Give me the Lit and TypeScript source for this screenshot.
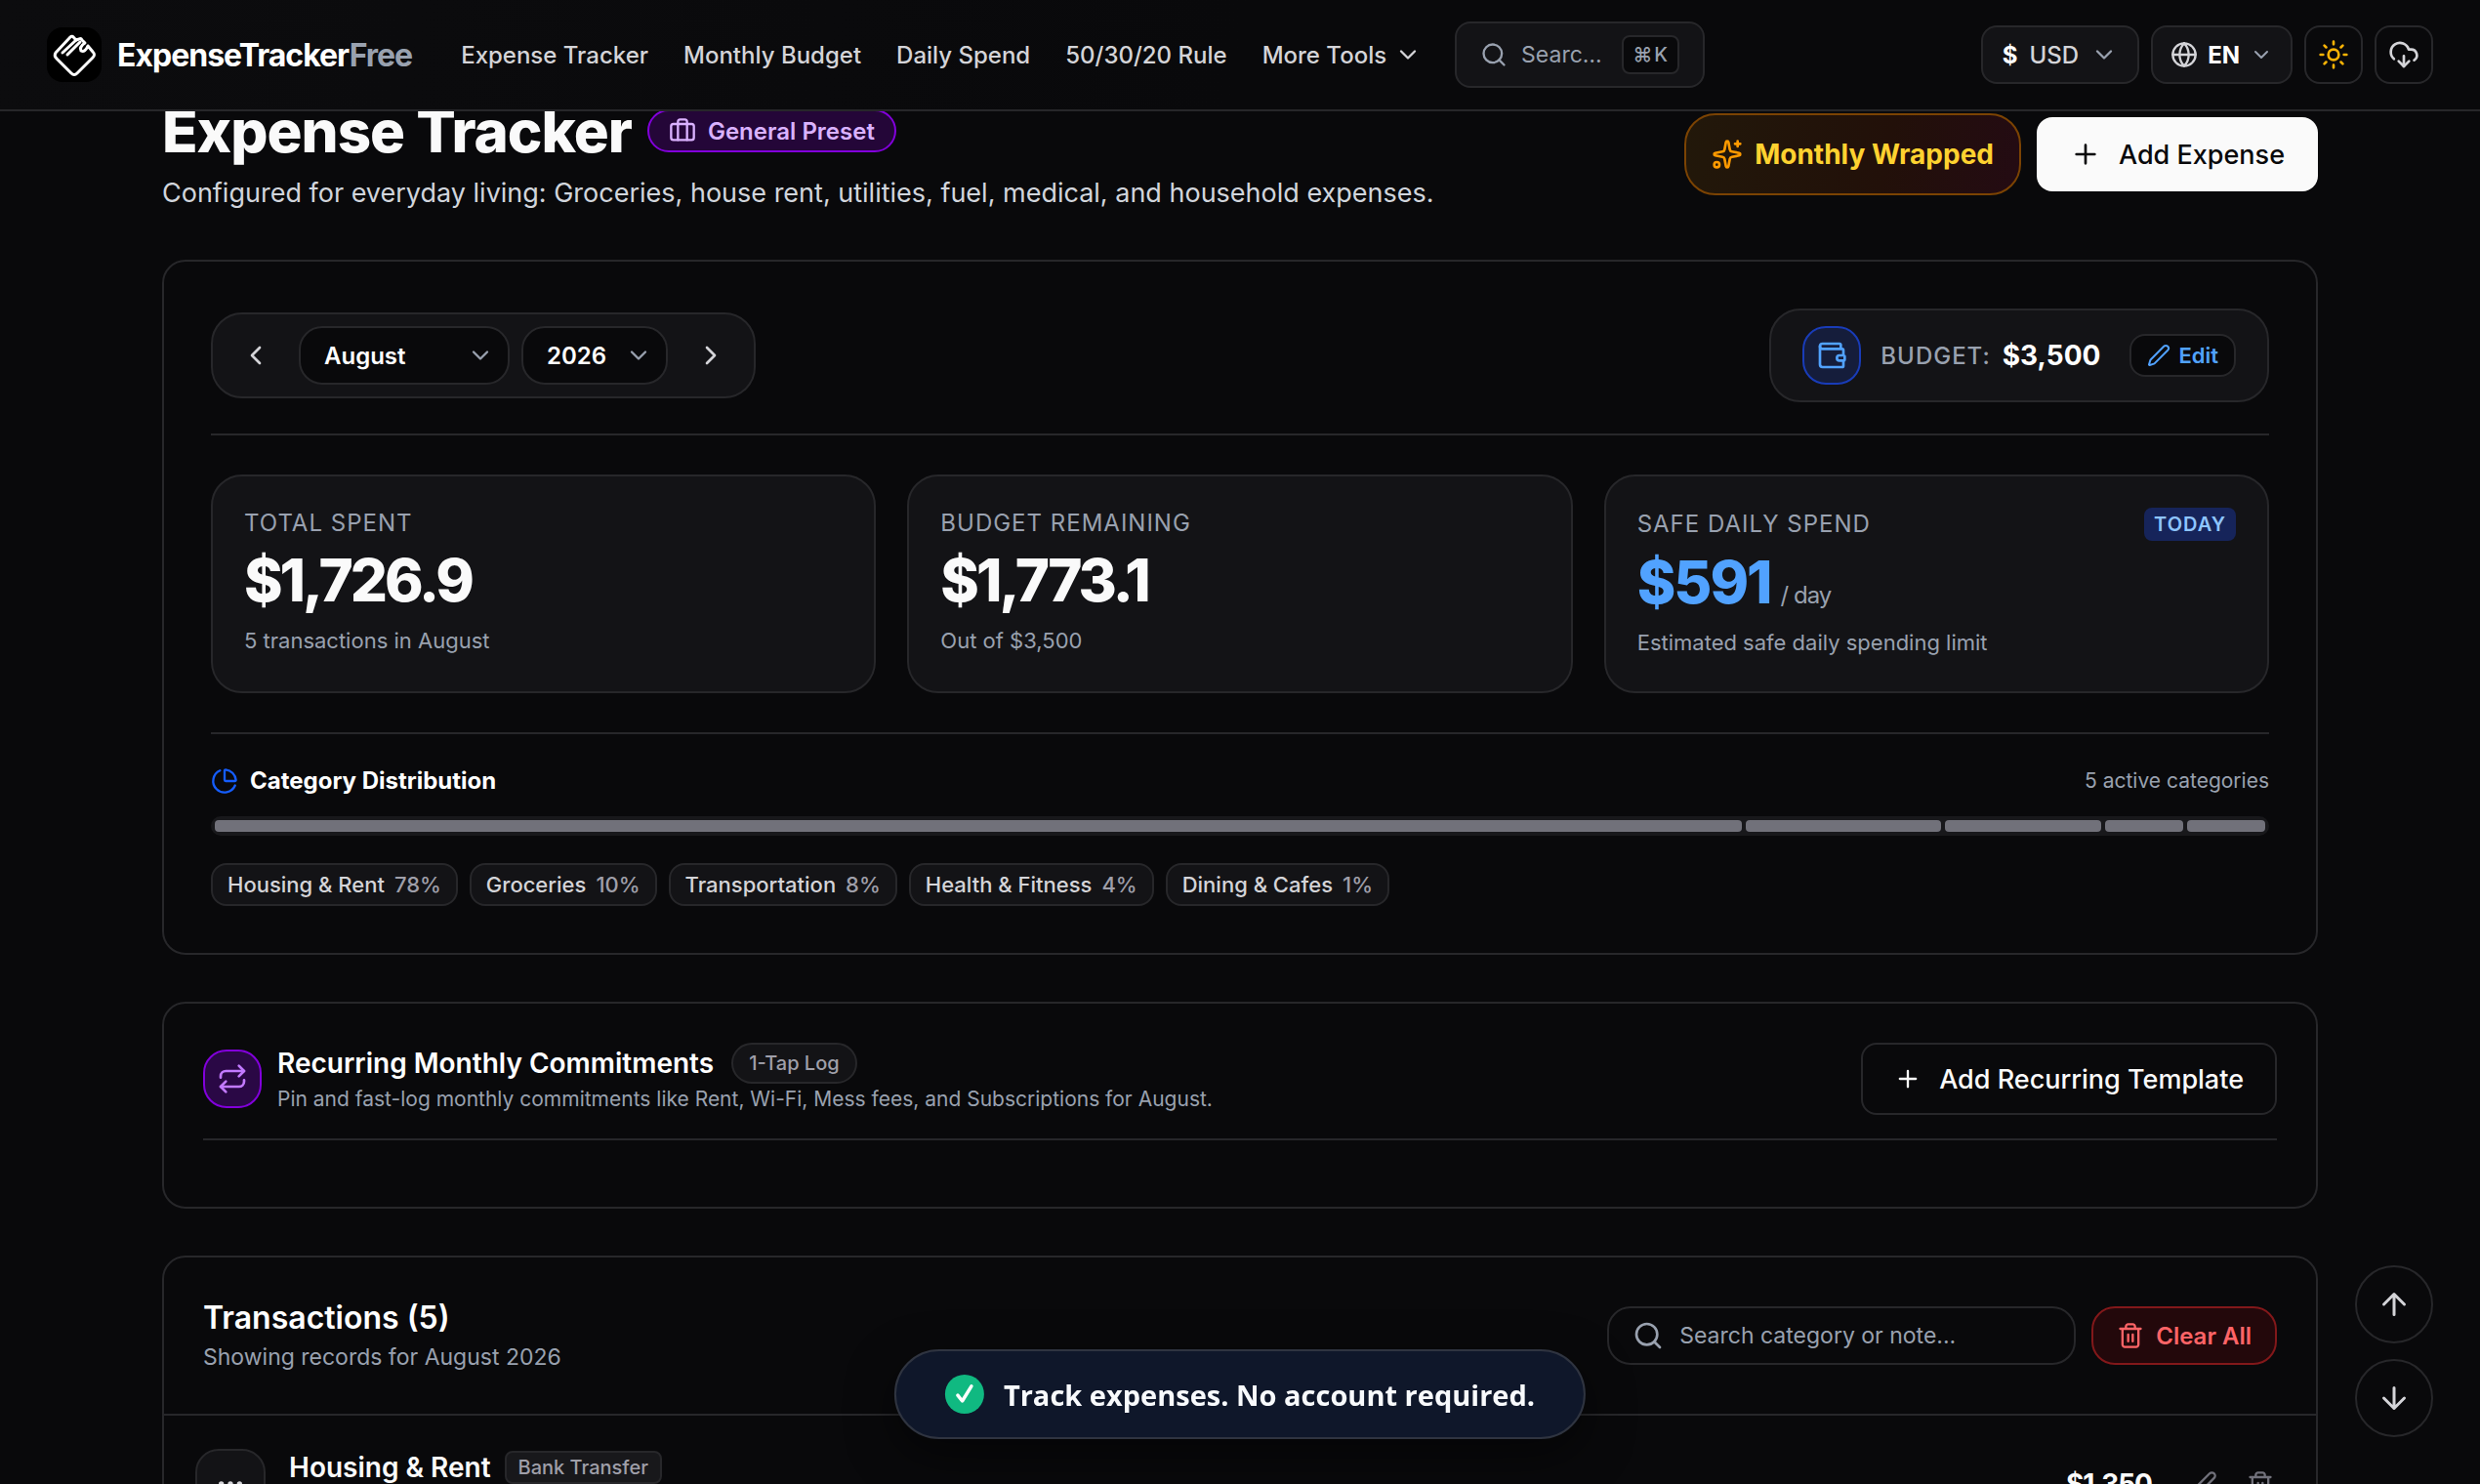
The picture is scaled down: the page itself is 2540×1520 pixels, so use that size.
import { LitElement, html, css, svg } from "lit";
import { customElement, property, state } from "lit/decorators.js";

const ICONS: Record<string, unknown> = {
  chevronDown: svg`<path d="m6 9 6 6 6-6"/>`,
  chevronLeft: svg`<path d="m15 18-6-6 6-6"/>`,
  chevronRight: svg`<path d="m9 18 6-6-6-6"/>`,
  search: svg`<path d="m21 21-4.34-4.34"/><circle cx="11" cy="11" r="8"/>`,
  globe: svg`<circle cx="12" cy="12" r="10"/><path d="M12 2a14.5 14.5 0 0 0 0 20 14.5 14.5 0 0 0 0-20"/><path d="M2 12h20"/>`,
  sun: svg`<circle cx="12" cy="12" r="4"/><path d="M12 2v2M12 20v2M4.93 4.93l1.41 1.41M17.66 17.66l1.41 1.41M2 12h2M20 12h2M6.34 17.66l-1.41 1.41M19.07 4.93l-1.41 1.41"/>`,
  cloudDownload: svg`<path d="M12 13v8l-4-4"/><path d="m12 21 4-4"/><path d="M4.393 15.269A7 7 0 1 1 15.71 8h1.79a4.5 4.5 0 0 1 2.436 8.284"/>`,
  briefcase: svg`<path d="M16 20V4a2 2 0 0 0-2-2h-4a2 2 0 0 0-2 2v16"/><rect width="20" height="14" x="2" y="6" rx="2"/>`,
  sparkles: svg`<path d="M11.017 2.814a1 1 0 0 1 1.966 0l1.051 5.558a2 2 0 0 0 1.594 1.594l5.558 1.051a1 1 0 0 1 0 1.966l-5.558 1.051a2 2 0 0 0-1.594 1.594l-1.051 5.558a1 1 0 0 1-1.966 0l-1.051-5.558a2 2 0 0 0-1.594-1.594l-5.558-1.051a1 1 0 0 1 0-1.966l5.558-1.051a2 2 0 0 0 1.594-1.594z"/><path d="M20 2v4M22 4h-4"/><circle cx="4" cy="20" r="2"/>`,
  plus: svg`<path d="M5 12h14M12 5v14"/>`,
  wallet: svg`<path d="M19 7V4a1 1 0 0 0-1-1H5a2 2 0 0 0 0 4h15a1 1 0 0 1 1 1v4h-3a2 2 0 0 0 0 4h3a1 1 0 0 0 1-1v-2a1 1 0 0 0-1-1"/><path d="M3 5v14a2 2 0 0 0 2 2h15a1 1 0 0 0 1-1v-4"/>`,
  pencil: svg`<path d="M21.174 6.812a1 1 0 0 0-3.986-3.987L3.842 16.174a2 2 0 0 0-.5.83l-1.321 4.352a.5.5 0 0 0 .623.622l4.353-1.32a2 2 0 0 0 .83-.497z"/>`,
  pie: svg`<path d="M21 12c.552 0 1.005-.449.95-.998a10 10 0 0 0-8.953-8.951c-.55-.055-.998.398-.998.95v8a1 1 0 0 0 1 1z"/><path d="M21.21 15.89A10 10 0 1 1 8 2.83"/>`,
  repeat: svg`<path d="m17 2 4 4-4 4"/><path d="M3 11v-1a4 4 0 0 1 4-4h14"/><path d="m7 22-4-4 4-4"/><path d="M21 13v1a4 4 0 0 1-4 4H3"/>`,
  trash: svg`<path d="M3 6h18M19 6v14c0 1-1 2-2 2H7c-1 0-2-1-2-2V6M8 6V4c0-1 1-2 2-2h4c1 0 2 1 2 2v2M10 11v6M14 11v6"/>`,
  arrowUp: svg`<path d="m5 12 7-7 7 7M12 19V5"/>`,
  arrowDown: svg`<path d="M12 5v14M19 12l-7 7-7-7"/>`,
  more: svg`<circle cx="12" cy="12" r="1"/><circle cx="19" cy="12" r="1"/><circle cx="5" cy="12" r="1"/>`,
  check: svg`<path d="m6 13 4 5 8-13"/>`,
};

@customElement("ui-icon")
class UiIcon extends LitElement {
  @property() name = "";
  static styles = css`
    :host { display: inline-flex; flex: none; width: 24px; height: 24px; }
    svg {
      width: 100%; height: 100%; fill: none; stroke: currentColor;
      stroke-width: var(--stroke, 2); stroke-linecap: round; stroke-linejoin: round;
    }
  `;
  render() {
    return html`<svg viewBox="0 0 24 24" aria-hidden="true">${ICONS[this.name]}</svg>`;
  }
}

const base = css`
  * { box-sizing: border-box; margin: 0; }
  button, input, select { font: inherit; color: inherit; }
  button { cursor: pointer; white-space: nowrap; }
  .s28 { width: 28px; height: 28px; }
  .s32 { width: 32px; height: 32px; }
  .s36 { width: 36px; height: 36px; }
`;

@customElement("site-header")
class SiteHeader extends LitElement {
  static styles = [base, css`
    :host { display: block; }
    header {
      display: flex; align-items: center; height: 114px; padding: 0 48px;
      background: linear-gradient(100deg, #0c0c0e, #09090b 50%); border-bottom: 2px solid #27272a;
    }
    .brand { display: flex; align-items: center; gap: 16px; color: #fff; text-decoration: none; font-size: 32px; font-weight: 700; letter-spacing: -1px; }
    .mark { width: 56px; height: 56px; border-radius: 16px; background: #000; }
    .brand em { font-style: normal; color: #99a1af; }
    nav { display: flex; align-items: center; gap: 36px; margin-left: 50px; }
    nav a, nav button { color: #d4d4d8; font-size: 24px; font-weight: 500; text-decoration: none; white-space: nowrap; }
    nav button { display: flex; align-items: center; gap: 8px; background: none; border: 0; padding: 0; }
    .find {
      display: flex; align-items: center; gap: 14px; width: 256px; height: 68px; margin-left: 34px; padding: 0 24px;
      border: 2px solid #27272a; border-radius: 16px; background: #131316; color: #99a1af; font-size: 23px; text-align: left;
    }
    .find span { flex: 1; }
    kbd { display: flex; align-items: center; gap: 2px; height: 40px; padding: 0 10px; border: 2px solid #27272a; border-radius: 8px; background: #09090b; font: 500 20px "Inter", "DejaVu Sans", sans-serif; }
    .tools { display: flex; gap: 12px; margin-left: auto; }
    .tools button {
      display: flex; align-items: center; justify-content: center; gap: 12px; height: 60px; padding: 0 20px;
      border: 2px solid #27272a; border-radius: 16px; background: #131316; color: #d4d4d8; font-size: 24px; font-weight: 500;
    }
    .tools b { color: #fff; font-weight: 700; }
    .tools .lang { gap: 10px; padding: 0 18px; }
    .tools .sq { width: 60px; padding: 0; background: #09090b; }
    .tools .sun { color: #fbb305; }
    .dim { color: #99a1af; }
  `];
  render() {
    return html`
      <header>
        <a class="brand" href="#">
          <svg class="mark" viewBox="0 0 56 56" fill="none" stroke="#fff" stroke-width="3" stroke-linecap="round" stroke-linejoin="round" aria-hidden="true">
            <path d="M42 19 47 25Q50 28 47 31L31 47Q28 50 25 47L10 32Q7 29 9 26L24 10Q26 8 28 11L30 13 33 12Q35 11 36 13L39 16Q33 20 35 24 39 26 42 19"/>
            <path d="M16 26 30 13"/>
            <path d="M21 28 34 15"/>
          </svg>
          <span>ExpenseTracker<em>Free</em></span>
        </a>
        <nav aria-label="Main">
          ${["Expense Tracker", "Monthly Budget", "Daily Spend", "50/30/20 Rule"].map((t) => html`<a href="#">${t}</a>`)}
          <button>More Tools <ui-icon class="s28" name="chevronDown"></ui-icon></button>
        </nav>
        <button class="find"><ui-icon class="s28" name="search"></ui-icon><span>Searc…</span><kbd><span>⌘</span>K</kbd></button>
        <div class="tools">
          <button><b>$</b>USD <ui-icon class="s28 dim" name="chevronDown"></ui-icon></button>
          <button class="lang"><ui-icon class="s28" name="globe"></ui-icon><b>EN</b><ui-icon class="dim" name="chevronDown"></ui-icon></button>
          <button class="sq sun" aria-label="Switch theme"><ui-icon class="s32" name="sun"></ui-icon></button>
          <button class="sq" aria-label="Backup"><ui-icon class="s32" name="cloudDownload"></ui-icon></button>
        </div>
      </header>`;
  }
}

const STATS = [
  { label: "TOTAL SPENT", value: "$1,726.9", note: "5 transactions in August" },
  { label: "BUDGET REMAINING", value: "$1,773.1", note: "Out of $3,500" },
  { label: "SAFE DAILY SPEND", value: "$591", unit: "/ day", tag: "TODAY", note: "Estimated safe daily spending limit" },
];

const CATEGORIES = [
  { name: "Housing & Rent", pct: 78, share: 78.2 },
  { name: "Groceries", pct: 10, share: 10 },
  { name: "Transportation", pct: 8, share: 8 },
  { name: "Health & Fitness", pct: 4, share: 4 },
  { name: "Dining & Cafes", pct: 1, share: 4 },
];

@customElement("month-overview")
class MonthOverview extends LitElement {
  static styles = [base, css`
    :host { display: block; }
    section { border: 2px solid #27272a; border-radius: 24px; padding: 48px; }
    .bar { display: flex; align-items: center; justify-content: space-between; padding-bottom: 32px; border-bottom: 2px solid #27272a; }
    .picker, .budget { display: flex; align-items: center; border: 2px solid #27272a; border-radius: 32px; background: #131316; }
    .picker { gap: 12px; padding: 12px; }
    .step { display: grid; place-items: center; width: 64px; height: 60px; border: 0; background: none; color: #d4d4d8; padding: 0; }
    .pick { display: grid; align-items: center; }
    .pick > * { grid-area: 1 / 1; }
    .pick select { appearance: none; height: 60px; padding: 0 24px; border: 2px solid #27272a; border-radius: 24px; background: #09090b; color: #fff; font-size: 24px; font-weight: 600; }
    .month { width: 216px; }
    .year { width: 150px; }
    .pick ui-icon { justify-self: end; margin-right: 16px; color: #99a1af; pointer-events: none; }
    .budget { height: 96px; padding: 0 32px; }
    .wallet { display: grid; place-items: center; width: 60px; height: 60px; border: 2px solid #193cb8; border-radius: 24px; background: #151d3b; color: #51a2ff; }
    .budget .label { margin-left: 20px; color: #99a1af; font-size: 24px; font-weight: 500; letter-spacing: 1px; }
    .budget strong { margin-left: 12px; color: #fff; font-size: 28px; font-weight: 700; }
    .edit { display: flex; align-items: center; gap: 8px; height: 44px; margin-left: 30px; padding: 0 16px; border: 2px solid #27272a; border-radius: 16px; background: #09090b; color: #51a2ff; font-size: 22px; font-weight: 600; }
    .stats { display: grid; grid-template-columns: repeat(3, 1fr); gap: 32px; padding: 40px 0; }
    .stat { min-height: 224px; padding: 32px; border: 2px solid #27272a; border-radius: 32px; background: #131316; }
    .head { display: flex; align-items: center; justify-content: space-between; min-height: 32px; color: #99a1af; font-size: 24px; line-height: 32px; letter-spacing: 1px; }
    .tag { padding: 0 10px; border-radius: 8px; background: #16245a; color: #8ec5ff; font-size: 20px; line-height: 34px; font-weight: 600; }
    .value { height: 60px; margin-top: 12px; color: #fafafa; font-size: 60px; line-height: 60px; font-weight: 800; letter-spacing: -3px; }
    .value small { margin-left: 10px; color: #99a1af; font-size: 24px; line-height: 24px; font-weight: 400; letter-spacing: -1px; }
    .value.blue { color: #51a2ff; letter-spacing: -2px; }
    .note { margin-top: 18px; color: #99a1af; font-size: 22px; line-height: 28px; }
    .dist { border-top: 2px solid #27272a; padding-top: 32px; }
    .dist header { display: flex; align-items: center; gap: 12px; line-height: 32px; }
    h2 { color: #fff; font-size: 24px; font-weight: 700; line-height: 32px; }
    .dist header ui-icon { color: #155dfc; }
    .dist header p { margin-left: auto; color: #99a1af; font-size: 21px; }
    .track { display: flex; gap: 4px; height: 20px; margin-top: 20px; padding: 4px; border-radius: 10px; background: #18181b; }
    .track span { border-radius: 4px; background: #71717a; }
    ul { display: flex; flex-wrap: wrap; gap: 12px; margin-top: 28px; padding: 0; list-style: none; }
    li { display: flex; align-items: center; gap: 10px; height: 44px; padding: 0 15px; border: 2px solid #27272a; border-radius: 16px; background: #131316; color: #d4d4d8; font-size: 22px; font-weight: 500; }
    li b { color: #9f9fa9; font-weight: 500; }
  `];
  render() {
    return html`
      <section>
        <div class="bar">
          <div class="picker">
            <button class="step" aria-label="Previous month"><ui-icon class="s32" name="chevronLeft"></ui-icon></button>
            <label class="pick"><select class="month" aria-label="Month"><option>August</option></select><ui-icon class="s28" name="chevronDown"></ui-icon></label>
            <label class="pick"><select class="year" aria-label="Year"><option>2026</option></select><ui-icon class="s28" name="chevronDown"></ui-icon></label>
            <button class="step" aria-label="Next month"><ui-icon class="s32" name="chevronRight"></ui-icon></button>
          </div>
          <div class="budget">
            <span class="wallet"><ui-icon class="s32" name="wallet"></ui-icon></span>
            <span class="label">BUDGET:</span><strong>$3,500</strong>
            <button class="edit"><ui-icon name="pencil"></ui-icon>Edit</button>
          </div>
        </div>
        <div class="stats">
          ${STATS.map((s) => html`
            <article class="stat">
              <div class="head"><span>${s.label}</span>${s.tag ? html`<span class="tag">${s.tag}</span>` : ""}</div>
              <p class="value ${s.unit ? "blue" : ""}">${s.value}${s.unit ? html`<small>${s.unit}</small>` : ""}</p>
              <p class="note">${s.note}</p>
            </article>`)}
        </div>
        <div class="dist">
          <header><ui-icon class="s28" name="pie"></ui-icon><h2>Category Distribution</h2><p>5 active categories</p></header>
          <div class="track">${CATEGORIES.map((c) => html`<span style="flex:${c.share} 1 0"></span>`)}</div>
          <ul>${CATEGORIES.map((c) => html`<li>${c.name}<b>${c.pct}%</b></li>`)}</ul>
        </div>
      </section>`;
  }
}

@customElement("recurring-panel")
class RecurringPanel extends LitElement {
  static styles = [base, css`
    :host { display: block; }
    section { min-height: 212px; border: 2px solid #27272a; border-radius: 24px; padding: 40px; }
    .row { display: flex; align-items: center; justify-content: space-between; padding-bottom: 24px; border-bottom: 2px solid #27272a; }
    .left { display: flex; align-items: center; gap: 16px; }
    .badge { display: grid; place-items: center; width: 60px; height: 60px; border: 2px solid #8200db; border-radius: 24px; background: #2a0845; color: #c27aff; }
    .title { display: flex; align-items: center; gap: 18px; height: 42px; }
    h2 { color: #fff; font-size: 28px; font-weight: 600; }
    .pill { height: 42px; padding: 0 16px; border: 2px solid #27272a; border-radius: 21px; background: #131316; color: #9f9fa9; font-size: 20px; font-weight: 500; line-height: 38px; }
    .sub { color: #99a1af; font-size: 21px; line-height: 32px; }
    .add { display: flex; align-items: center; gap: 18px; height: 74px; padding: 0 32px; border: 2px solid #27272a; border-radius: 16px; background: #09090b; color: #fafafa; font-size: 27px; font-weight: 500; }
  `];
  render() {
    return html`
      <section>
        <div class="row">
          <div class="left">
            <span class="badge"><ui-icon class="s32" name="repeat"></ui-icon></span>
            <div>
              <div class="title"><h2>Recurring Monthly Commitments</h2><span class="pill">1-Tap Log</span></div>
              <p class="sub">Pin and fast-log monthly commitments like Rent, Wi-Fi, Mess fees, and Subscriptions for August.</p>
            </div>
          </div>
          <button class="add"><ui-icon class="s28" name="plus"></ui-icon>Add Recurring Template</button>
        </div>
      </section>`;
  }
}

@customElement("transaction-list")
class TransactionList extends LitElement {
  @state() private query = "";
  static styles = [base, css`
    :host { display: block; }
    section { border: 2px solid #27272a; border-radius: 24px; }
    .top { display: flex; align-items: center; justify-content: space-between; padding: 40px; border-bottom: 2px solid #27272a; }
    h2 { color: #fff; font-size: 32px; font-weight: 600; line-height: 44px; }
    .sub { color: #99a1af; font-size: 23px; line-height: 36px; }
    .actions { display: flex; gap: 16px; }
    .search { display: grid; align-items: center; color: #99a1af; }
    .search > * { grid-area: 1 / 1; }
    .search ui-icon { margin-left: 26px; pointer-events: none; }
    .search input { width: 480px; height: 60px; padding: 0 24px 0 72px; border: 2px solid #27272a; border-radius: 24px; background: #09090b; color: #fafafa; font-size: 23px; outline: none; }
    .search input::placeholder { color: #99a1af; opacity: 1; }
    .clear { display: flex; align-items: center; gap: 12px; height: 60px; padding: 0 24px; border: 2px solid #82181a; border-radius: 24px; background: #23080b; color: #ff6467; font-size: 24px; font-weight: 600; }
    ul { padding: 0; list-style: none; }
    li { display: flex; align-items: center; gap: 24px; padding: 34px 32px; border-bottom: 2px solid #27272a; }
    .glyph { display: grid; place-items: center; width: 72px; height: 72px; border: 2px solid #27272a; border-radius: 24px; background: #131316; color: #d4d4d8; }
    .name { display: flex; align-items: center; gap: 14px; height: 38px; color: #fafafa; font-size: 28px; font-weight: 600; }
    .method { padding: 0 12px; border: 2px solid #27272a; border-radius: 8px; background: #18181b; color: #9f9fa9; font-size: 20px; font-weight: 500; line-height: 30px; }
    .date { height: 34px; }
    .amount { margin-left: auto; color: #fafafa; font-size: 28px; font-weight: 700; letter-spacing: -1px; }
    .ops { display: flex; gap: 8px; padding-left: 4px; color: #71717b; }
    .ops button { display: grid; place-items: center; width: 50px; height: 50px; padding: 0; border: 0; background: none; }
  `];
  render() {
    return html`
      <section>
        <div class="top">
          <div><h2>Transactions (5)</h2><p class="sub">Showing records for August 2026</p></div>
          <div class="actions">
            <label class="search">
              <input type="text" aria-label="Search transactions" placeholder="Search category or note..." .value=${this.query}
                @input=${(e: Event) => (this.query = (e.target as HTMLInputElement).value)} />
              <ui-icon class="s32" name="search"></ui-icon>
            </label>
            <button class="clear"><ui-icon class="s28" name="trash"></ui-icon>Clear All</button>
          </div>
        </div>
        <ul>
          <li>
            <span class="glyph"><ui-icon class="s32" name="more"></ui-icon></span>
            <div><div class="name">Housing &amp; Rent<span class="method">Bank Transfer</span></div><p class="date"></p></div>
            <span class="amount">$1,350</span>
            <div class="ops">
              <button aria-label="Edit transaction"><ui-icon class="s28" name="pencil"></ui-icon></button>
              <button aria-label="Delete transaction"><ui-icon class="s28" name="trash"></ui-icon></button>
            </div>
          </li>
        </ul>
      </section>`;
  }
}

@customElement("app-root")
class AppRoot extends LitElement {
  static styles = [base, css`
    :host { display: block; height: 100vh; overflow: hidden; background: #09090b; color: #fafafa; font-family: "Inter", "Liberation Sans", sans-serif; }
    site-header { position: fixed; inset: 0 0 auto; z-index: 2; }
    main { display: flex; flex-direction: column; gap: 48px; max-width: 2304px; margin: 0 auto; padding: 98px 48px 0; }
    .hero { display: flex; align-items: center; justify-content: space-between; }
    .title { display: flex; align-items: center; gap: 16px; }
    h1 { font-size: 60px; line-height: 72px; font-weight: 800; letter-spacing: -1px; }
    .preset { display: flex; align-items: center; gap: 12px; height: 44px; padding: 0 20px; border: 2px solid #8200db; border-radius: 22px; background: #240638; color: #dab2ff; font-size: 24px; font-weight: 600; }
    .lead { margin-top: 8px; color: #d1d5dc; font-size: 27px; line-height: 40px; }
    .cta { display: flex; align-items: center; gap: 16px; }
    .cta button { display: flex; align-items: center; }
    .wrapped { gap: 12px; height: 84px; padding: 0 26px; border: 2px solid #7b4303; border-radius: 32px; background: linear-gradient(100deg, #22180a, #221009 60%, #240b13); color: #ffd230; font-size: 28px; font-weight: 700; }
    .wrapped ui-icon { color: #fe9a00; }
    .add { gap: 18px; height: 76px; padding: 0 34px; border: 0; border-radius: 16px; background: #fafafa; color: #09090b; font-size: 27px; font-weight: 500; }
    .jump { position: fixed; right: 48px; bottom: 48px; display: flex; flex-direction: column; gap: 16px; }
    .jump button { display: grid; place-items: center; width: 80px; height: 80px; padding: 0; border: 2px solid #27272a; border-radius: 50%; background: #09090b; color: #d4d4d8; }
    .toast {
      position: fixed; left: 50%; bottom: 46px; transform: translateX(-50%); display: flex; align-items: center; gap: 20px; height: 92px; padding: 0 50px;
      border: 2px solid #2f3440; border-radius: 46px; background: #0f172a; box-shadow: 0 16px 48px rgb(0 0 0 / 50%);
      color: #f8fafc; font: 700 29px "Open Sans", "Noto Sans", sans-serif; white-space: nowrap;
    }
    .tick { display: grid; place-items: center; width: 40px; height: 40px; border-radius: 50%; background: #10b981; color: #fff; --stroke: 3; }
  `];
  render() {
    return html`
      <site-header></site-header>
      <main>
        <div class="hero">
          <div>
            <div class="title"><h1>Expense Tracker</h1><span class="preset"><ui-icon class="s28" name="briefcase"></ui-icon>General Preset</span></div>
            <p class="lead">Configured for everyday living: Groceries, house rent, utilities, fuel, medical, and household expenses.</p>
          </div>
          <div class="cta">
            <button class="wrapped"><ui-icon class="s32" name="sparkles"></ui-icon>Monthly Wrapped</button>
            <button class="add"><ui-icon class="s32" name="plus"></ui-icon>Add Expense</button>
          </div>
        </div>
        <month-overview></month-overview>
        <recurring-panel></recurring-panel>
        <transaction-list></transaction-list>
      </main>
      <div class="jump">
        <button aria-label="Scroll to top"><ui-icon class="s36" name="arrowUp"></ui-icon></button>
        <button aria-label="Scroll to bottom"><ui-icon class="s36" name="arrowDown"></ui-icon></button>
      </div>
      <div class="toast" role="status"><span class="tick"><ui-icon class="s28" name="check"></ui-icon></span>Track expenses. No account required.</div>`;
  }
}
